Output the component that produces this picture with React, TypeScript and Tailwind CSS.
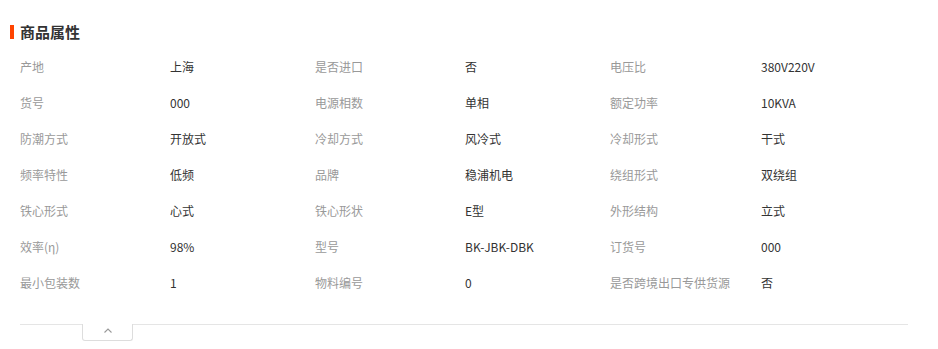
import React from 'react';

type Attr = { label: string; value: string };

const attrs: Attr[] = [
  { label: '产地', value: '上海' },
  { label: '是否进口', value: '否' },
  { label: '电压比', value: '380V220V' },
  { label: '货号', value: '000' },
  { label: '电源相数', value: '单相' },
  { label: '额定功率', value: '10KVA' },
  { label: '防潮方式', value: '开放式' },
  { label: '冷却方式', value: '风冷式' },
  { label: '冷却形式', value: '干式' },
  { label: '频率特性', value: '低频' },
  { label: '品牌', value: '稳浦机电' },
  { label: '绕组形式', value: '双绕组' },
  { label: '铁心形式', value: '心式' },
  { label: '铁心形状', value: 'E型' },
  { label: '外形结构', value: '立式' },
  { label: '效率(η)', value: '98%' },
  { label: '型号', value: 'BK-JBK-DBK' },
  { label: '订货号', value: '000' },
  { label: '最小包装数', value: '1' },
  { label: '物料编号', value: '0' },
  { label: '是否跨境出口专供货源', value: '否' },
];

const App: React.FC = () => {
  return (
    <div
      className="w-[938px] h-[349px] bg-white pt-[22px] overflow-hidden"
      style={{ fontFamily: '"Microsoft YaHei", "Noto Sans CJK SC", "Noto Sans", sans-serif' }}
    >
      {/* section title */}
      <div className="flex items-center h-[20px] pl-[10px]">
        <div className="w-[4px] h-[14px] bg-[#ff4400]"></div>
        <h3 className="ml-[6px] text-[15px] font-bold text-[#333] leading-[20px]">商品属性</h3>
      </div>

      {/* attribute table */}
      <div className="mt-[7px] ml-[20px] w-[888px] grid grid-cols-[295px_295px_298px]">
        {attrs.map((a, i) => (
          <div key={i} className="flex items-center h-[36px] text-[12px]">
            <span className={`${i % 3 === 2 ? 'w-[151px]' : 'w-[150px]'} shrink-0 text-[#999]`}>{a.label}</span>
            <span className="text-[#333]">{a.value}</span>
          </div>
        ))}
      </div>

      {/* collapse toggle */}
      <div className="mt-[23px] ml-[20px] w-[888px] flex items-start">
        <div className="w-[62px] border-t border-[#e5e5e5]"></div>
        <button className="w-[51px] h-[17px] border-x border-b border-[#ddd] rounded-b-[3px] bg-white flex items-start justify-center pt-[4px]">
          <svg width="8" height="5" viewBox="0 0 8 5" fill="none">
            <path d="M0.5 4.5 L4 1 L7.5 4.5" stroke="#999" strokeWidth="1.1" />
          </svg>
        </button>
        <div className="flex-1 border-t border-[#e5e5e5]"></div>
      </div>
    </div>
  );
};

export default App;
